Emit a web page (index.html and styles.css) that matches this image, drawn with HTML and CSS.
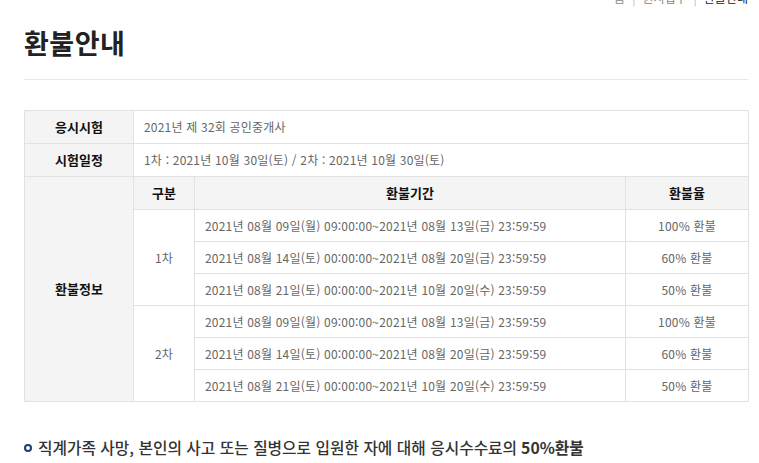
FILE: index.html
```html
<!DOCTYPE html>
<html lang="ko">
<head>
<meta charset="utf-8">
<link rel="stylesheet" href="styles.css">
</head>
<body>
<div class="page">
  <div class="crumb"><span>홈</span><i>|</i><span>원서접수</span><i>|</i><span class="cur">환불안내</span></div>
  <h1 class="title">환불안내</h1>
  <table class="info">
    <colgroup>
      <col class="c1"><col class="c2"><col class="c3"><col class="c4">
    </colgroup>
    <tr class="tall">
      <th>응시시험</th>
      <td colspan="3" class="left">2021년 제 32회 공인중개사</td>
    </tr>
    <tr class="tall">
      <th>시험일정</th>
      <td colspan="3" class="left">1차 : 2021년 10월 30일(토) / 2차 : 2021년 10월 30일(토)</td>
    </tr>
    <tr class="tall">
      <th rowspan="7">환불정보</th>
      <th>구분</th>
      <th>환불기간</th>
      <th>환불율</th>
    </tr>
    <tr>
      <td rowspan="3">1차</td>
      <td class="left">2021년 08월 09일(월) 09:00:00~2021년 08월 13일(금) 23:59:59</td>
      <td>100% 환불</td>
    </tr>
    <tr>
      <td class="left">2021년 08월 14일(토) 00:00:00~2021년 08월 20일(금) 23:59:59</td>
      <td>60% 환불</td>
    </tr>
    <tr>
      <td class="left">2021년 08월 21일(토) 00:00:00~2021년 10월 20일(수) 23:59:59</td>
      <td>50% 환불</td>
    </tr>
    <tr>
      <td rowspan="3">2차</td>
      <td class="left">2021년 08월 09일(월) 09:00:00~2021년 08월 13일(금) 23:59:59</td>
      <td>100% 환불</td>
    </tr>
    <tr>
      <td class="left">2021년 08월 14일(토) 00:00:00~2021년 08월 20일(금) 23:59:59</td>
      <td>60% 환불</td>
    </tr>
    <tr>
      <td class="left">2021년 08월 21일(토) 00:00:00~2021년 10월 20일(수) 23:59:59</td>
      <td>50% 환불</td>
    </tr>
  </table>
  <p class="note"><span class="dot"></span>직계가족 사망, 본인의 사고 또는 질병으로 입원한 자에 대해 응시수수료의 <b>50%환불</b></p>
</div>
</body>
</html>
```
FILE: styles.css
```css
html, body { margin: 0; padding: 0; background: #fff; }
body {
  font-family: "Noto Sans CJK KR", "Noto Sans", sans-serif;
  color: #333;
  overflow: hidden;
}
.page {
  width: 724px;
  margin-left: 24px;
  position: relative;
}
.crumb {
  position: absolute;
  right: 0;
  top: -9px;
  font-size: 12px;
  line-height: 14px;
  color: #888;
  display: flex;
  gap: 7px;
}
.crumb i { font-style: normal; color: #bbb; }
.crumb .cur { color: #222; }
.title {
  margin: 0;
  padding-top: 26px;
  font-size: 27px;
  line-height: 34px;
  font-weight: 700;
  color: #222;
  height: 53px;
  letter-spacing: 0.5px;
  border-bottom: 1px solid #e8e8e8;
}
.info {
  margin-top: 30px;
  width: 724px;
  border-collapse: collapse;
  table-layout: fixed;
  font-size: 12px;
  letter-spacing: 0.2px;
}
.c1 { width: 109px; }
.c2 { width: 61px; }
.c3 { width: 431px; }
.c4 { width: 123px; }
.info th, .info td {
  border: 1px solid #e1e1e1;
  height: 31px;
  padding: 0;
  text-align: center;
  vertical-align: middle;
  line-height: 16px;
}
.info tr.tall > th, .info tr.tall > td { height: 32px; }
.info th {
  background: #f4f4f4;
  color: #111;
  font-weight: 700;
  font-size: 13px;
  letter-spacing: 0;
}
.info td {
  color: #666;
  font-weight: 400;
}
.info td.left {
  text-align: left;
  padding-left: 10px;
}
.note {
  margin: 36px 0 0 0;
  font-size: 15.75px;
  line-height: 20px;
  color: #333;
  font-weight: 500;
  display: flex;
  align-items: center;
}
.note b { font-weight: 700; margin-left: 4px; }
.dot {
  width: 4px;
  height: 4px;
  border: 2px solid #1a3d6b;
  border-radius: 50%;
  margin-right: 6px;
  flex: none;
}
```
